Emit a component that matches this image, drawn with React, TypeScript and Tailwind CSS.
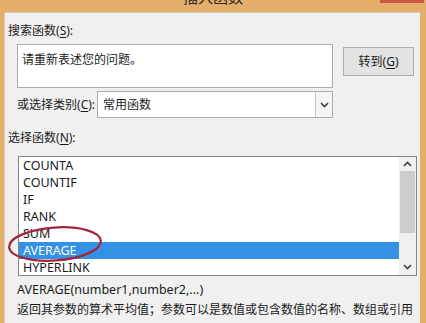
const FUNCS = ["COUNTA", "COUNTIF", "IF", "RANK", "SUM", "AVERAGE", "HYPERLINK"];
const SELECTED = "AVERAGE";

const font = { fontFamily: '"Noto Sans", "Noto Sans CJK SC", sans-serif' };

function Key({ k }: { k: string }) {
  return (
    <>
      (<span className="underline underline-offset-2">{k}</span>)
    </>
  );
}

function Chevron({ up = false }: { up?: boolean }) {
  return (
    <svg width="9" height="6" viewBox="0 0 9 6" className={up ? "rotate-180" : ""}>
      <path d="M1 1 L4.5 4.5 L8 1" fill="none" stroke="#404040" strokeWidth="1.6" />
    </svg>
  );
}

function TitleBar() {
  return (
    <div className="relative flex h-[12px] shrink-0 justify-center overflow-hidden">
      <span className="-mt-[12px] text-[15px] leading-[18px] text-[#2e2a26]">插入函数</span>
      <div className="absolute right-[2px] top-0 h-[3px] w-[44px] bg-[#c8583e]" />
    </div>
  );
}

function FunctionList() {
  return (
    <div className="ml-[13px] mt-[11px] flex h-[120px] w-[399px] border border-[#82868c] bg-white">
      <ul className="flex-1">
        {FUNCS.map((f) => (
          <li
            key={f}
            className={
              "flex h-[17px] items-center pl-[4px] text-[12.5px] " +
              (f === SELECTED ? "bg-[#3491e4] text-white" : "text-[#1a1a1a]")
            }
          >
            {f}
          </li>
        ))}
      </ul>
      <div className="flex w-[17px] flex-col bg-[#f0f0f0]">
        <div className="flex h-[14px] items-center justify-center">
          <Chevron up />
        </div>
        <div className="mx-[1px] h-[62px] bg-[#cdcdcd]" />
        <div className="flex-1" />
        <div className="flex h-[16px] items-center justify-center">
          <Chevron />
        </div>
      </div>
    </div>
  );
}

export default function App() {
  return (
    <div
      className="relative flex h-[323px] w-[426px] flex-col overflow-hidden bg-[#e4ae6b] text-[12px] leading-[14px] text-[#1a1a1a]"
      style={font}
    >
      <TitleBar />
      <div className="ml-[4px] mr-[6px] flex flex-1 flex-col border-l border-t border-[#d8cbb8] bg-[#f0f0f0]">
        <p className="ml-[3px] mt-[11px]">
          搜索函数<Key k="S" />:
        </p>

        <div className="mt-[6px] flex items-start">
          <div className="ml-[12px] h-[44px] w-[316px] border border-[#a9acb2] bg-white px-[4px] pt-[8px]">
            请重新表述您的问题。
          </div>
          <button className="ml-[10px] mt-[3px] h-[29px] w-[71px] border border-[#adadad] bg-[#e3e3e3] text-[12px]">
            转到<Key k="G" />
          </button>
        </div>

        <div className="mt-[3px] flex h-[27px] items-center">
          <span className="ml-[12px] w-[80px]">
            或选择类别<Key k="C" />:
          </span>
          <div className="flex h-[27px] w-[236px] border border-[#a9acb2] bg-white">
            <span className="flex flex-1 items-center pl-[5px]">常用函数</span>
            <span className="flex w-[17px] items-center justify-center border-l border-[#c8c8c8] bg-[#f4f4f4]">
              <Chevron />
            </span>
          </div>
        </div>

        <p className="ml-[3px] mt-[13px]">
          选择函数<Key k="N" />:
        </p>

        <FunctionList />

        <p className="ml-[12px] mt-[7px] text-[12.5px]">AVERAGE(number1,number2,...)</p>
        <p className="ml-[12px] mt-[6px] whitespace-nowrap">
          返回其参数的算术平均值；参数可以是数值或包含数值的名称、数组或引用
        </p>
      </div>

      <svg className="absolute left-[5px] top-[222px]" width="100" height="44" viewBox="0 0 100 44">
        <ellipse
          cx="50"
          cy="22"
          rx="46"
          ry="16.5"
          fill="none"
          stroke="#a3243a"
          strokeWidth="2.2"
          transform="rotate(-4 50 22)"
        />
      </svg>
    </div>
  );
}
